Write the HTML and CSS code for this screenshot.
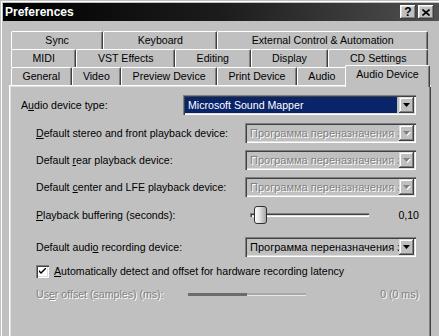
FILE: index.html
```html
<!DOCTYPE html>
<html lang="en">
<head>
    <meta charset="UTF-8">
    <title>Preferences</title>
    <link rel="stylesheet" href="styles.css">
</head>
<body>
    <div class="window">
        <div class="titlebar">
            <span class="title">Preferences</span>
            <div class="caption-buttons">
                <div class="caption-btn help">?</div>
                <div class="caption-btn">
                    <svg width="8" height="7" viewBox="0 0 8 7"><path d="M0.5 0.5L7.5 6.5M7.5 0.5L0.5 6.5" stroke="#000" stroke-width="1.6"/></svg>
                </div>
            </div>
        </div>

        <div class="dialog">
            <div class="tabs">
                <div class="tab-row">
                    <div class="tab">Sync</div>
                    <div class="tab">Keyboard</div>
                    <div class="tab">External Control &amp; Automation</div>
                </div>
                <div class="tab-row">
                    <div class="tab">MIDI</div>
                    <div class="tab">VST Effects</div>
                    <div class="tab">Editing</div>
                    <div class="tab">Display</div>
                    <div class="tab">CD Settings</div>
                </div>
                <div class="tab-row">
                    <div class="tab">General</div>
                    <div class="tab">Video</div>
                    <div class="tab">Preview Device</div>
                    <div class="tab">Print Device</div>
                    <div class="tab">Audio</div>
                    <div class="tab selected">Audio Device</div>
                </div>
            </div>

            <div class="panel">
                <div class="field">
                    <span class="label">A<u>u</u>dio device type:</span>
                    <div class="combo combo--wide combo--focused">
                        <span class="combo-text">Microsoft Sound Mapper</span>
                        <span class="combo-btn"><svg width="7" height="4" viewBox="0 0 7 4"><path d="M0 0H7L3.5 4Z" fill="#000"/></svg></span>
                    </div>
                </div>

                <div class="field field--after-main">
                    <span class="label indent"><u>D</u>efault stereo and front playback device:</span>
                    <div class="combo combo--disabled">
                        <span class="combo-text">Программа переназначения звука</span>
                        <span class="combo-btn"><svg width="8" height="5" viewBox="0 0 8 5"><path d="M1 1H8L4.5 5Z" fill="#fff"/><path d="M0 0H7L3.5 4Z" fill="#808080"/></svg></span>
                    </div>
                </div>

                <div class="field">
                    <span class="label indent">Default <u>r</u>ear playback device:</span>
                    <div class="combo combo--disabled">
                        <span class="combo-text">Программа переназначения звука</span>
                        <span class="combo-btn"><svg width="8" height="5" viewBox="0 0 8 5"><path d="M1 1H8L4.5 5Z" fill="#fff"/><path d="M0 0H7L3.5 4Z" fill="#808080"/></svg></span>
                    </div>
                </div>

                <div class="field">
                    <span class="label indent">Default <u>c</u>enter and LFE playback device:</span>
                    <div class="combo combo--disabled">
                        <span class="combo-text">Программа переназначения звука</span>
                        <span class="combo-btn"><svg width="8" height="5" viewBox="0 0 8 5"><path d="M1 1H8L4.5 5Z" fill="#fff"/><path d="M0 0H7L3.5 4Z" fill="#808080"/></svg></span>
                    </div>
                </div>

                <div class="field field--slider">
                    <span class="label indent"><u>P</u>layback buffering (seconds):</span>
                    <div class="slider slider--buffer">
                        <div class="track">
                            <div class="thumb"></div>
                        </div>
                        <span class="value">0,10</span>
                    </div>
                </div>

                <div class="field field--recording">
                    <span class="label indent">Default audi<u>o</u> recording device:</span>
                    <div class="combo">
                        <span class="combo-text">Программа переназначения звука</span>
                        <span class="combo-btn"><svg width="7" height="4" viewBox="0 0 7 4"><path d="M0 0H7L3.5 4Z" fill="#000"/></svg></span>
                    </div>
                </div>

                <div class="field field--check">
                    <span class="checkbox">
                        <svg width="7" height="7" viewBox="0 0 7 7"><path d="M0 2V4L2 6L7 1V-1L2 4Z" fill="#000"/></svg>
                    </span>
                    <span class="label check-label"><u>A</u>utomatically detect and offset for hardware recording latency</span>
                </div>

                <div class="field field--offset">
                    <span class="label indent disabled">Us<u>e</u>r offset (samples) (ms):</span>
                    <div class="slider slider--offset">
                        <div class="track track--disabled">
                            <div class="track-fill"></div>
                        </div>
                        <span class="value disabled">0 (0 ms)</span>
                    </div>
                </div>
            </div>
        </div>
    </div>
</body>
</html>
```

FILE: styles.css
```css
* {
    margin: 0;
    padding: 0;
    box-sizing: border-box;
}

body {
    background-color: #c0c0c0;
    font-family: "Liberation Sans", Arial, sans-serif;
    font-size: 10.6px;
    color: #000;
    width: 439px;
    height: 336px;
    overflow: hidden;
}

.window {
    width: 442px;
    height: 340px;
    padding: 3px;
    background: #c0c0c0;
    box-shadow: inset 1px 1px #c0c0c0, inset 2px 2px #fff;
}

/* title bar */
.titlebar {
    height: 18px;
    display: flex;
    align-items: center;
    padding: 0 5px 0 2px;
    background: linear-gradient(to right, #000 0%, #1c1c1c 50%, #505050 100%);
    color: #fff;
}

.title {
    font-weight: bold;
    font-size: 12px;
}

.caption-buttons {
    margin-left: auto;
    display: flex;
    gap: 2px;
}

.caption-btn {
    width: 16px;
    height: 14px;
    display: flex;
    align-items: center;
    justify-content: center;
    background: #c0c0c0;
    color: #000;
    box-shadow: inset -1px -1px #404040, inset 1px 1px #fff, inset -2px -2px #808080, inset 2px 2px #dfdfdf;
}

.caption-btn.help {
    font-weight: bold;
    font-size: 12px;
    line-height: 14px;
}

/* tabs */
.dialog {
    padding: 10px 0 0 6px;
}

.tabs {
    width: 422px;
    padding: 0 3px 0 2px;
}

.tab-row {
    display: flex;
    height: 18px;
    align-items: flex-start;
}

.tab {
    flex: 1 1 auto;
    height: 18px;
    padding: 0 4px;
    text-align: center;
    white-space: nowrap;
    line-height: 17px;
    background: #c0c0c0;
    border-top: 1px solid #fff;
    border-left: 1px solid #fff;
    border-right: 1px solid #404040;
    border-radius: 2px 2px 0 0;
    box-shadow: inset -1px 0 #808080;
}

.tab.selected {
    position: relative;
    z-index: 1;
    height: 22px;
    margin: -2px -2px 0 -2px;
    line-height: 16px;
}

/* panel */
.panel {
    position: relative;
    width: 422px;
    height: 260px;
    padding: 10px 15px 0 12px;
    box-shadow: inset 1px 1px #fff, inset 2px 2px #dfdfdf, inset -1px -1px #404040, inset -2px -2px #808080;
}

.field {
    display: flex;
    align-items: center;
    height: 20px;
    margin-top: 7px;
}

.field:first-child {
    margin-top: 0;
}

.field--after-main,
.field--slider {
    margin-top: 8px;
}

.field--recording {
    margin-top: 12px;
}

.field--check {
    margin-top: 4px;
}

.field--offset {
    margin-top: 3px;
}

.label {
    white-space: nowrap;
}

.indent {
    margin-left: 15px;
}

.disabled {
    color: #808080;
    text-shadow: 1px 1px #fff;
}

/* combo boxes */
.combo {
    margin-left: auto;
    width: 171px;
    height: 20px;
    padding: 2px;
    display: flex;
    background: #c0c0c0;
    box-shadow: inset 1px 1px #808080, inset 2px 2px #404040, inset -1px -1px #fff, inset -2px -2px #dfdfdf;
}

.combo--wide {
    width: 233px;
}

.combo-text {
    flex: 1;
    overflow: hidden;
    white-space: nowrap;
    padding-left: 3px;
    font-size: 11px;
    line-height: 16px;
}

.combo--focused .combo-text {
    background: #0a246a;
    color: #fff;
    margin-right: 2px;
    font-size: 10.6px;
}

.combo--disabled .combo-text {
    color: #808080;
    text-shadow: 1px 1px #fff;
}

.combo-btn {
    width: 15px;
    height: 16px;
    display: flex;
    align-items: center;
    justify-content: center;
    background: #c0c0c0;
    box-shadow: inset -1px -1px #404040, inset 1px 1px #dfdfdf, inset -2px -2px #808080, inset 2px 2px #fff;
}

/* sliders */
.slider {
    margin-left: auto;
    margin-right: -3px;
    display: flex;
    align-items: center;
}

.slider--buffer {
    width: 169px;
}

.slider--offset {
    width: 231px;
}

.track {
    position: relative;
    width: 119px;
    height: 4px;
    box-shadow: inset 1px 1px #808080, inset 2px 2px #404040, inset -1px -1px #fff, inset -2px -2px #dfdfdf;
}

.track--disabled {
    width: 118px;
    height: 3px;
    background: #a8a8a8;
    box-shadow: inset 0 -1px #e8e8e8;
}

.track-fill {
    width: 59px;
    height: 3px;
    background: #6c6c6c;
}

.thumb {
    position: absolute;
    left: 4px;
    top: -7px;
    width: 13px;
    height: 18px;
    border: 1px solid #303030;
    border-radius: 3px;
    background: linear-gradient(to right, #fdfdfd 0%, #e4e4e4 40%, #a8a8a8 100%);
}

.value {
    margin-left: auto;
}

/* checkbox */
.checkbox {
    margin-left: 15px;
    width: 13px;
    height: 13px;
    display: flex;
    align-items: center;
    justify-content: center;
    background: #fff;
    box-shadow: inset 1px 1px #808080, inset 2px 2px #404040, inset -1px -1px #fff, inset -2px -2px #dfdfdf;
}

.check-label {
    margin-left: 5px;
}
```
